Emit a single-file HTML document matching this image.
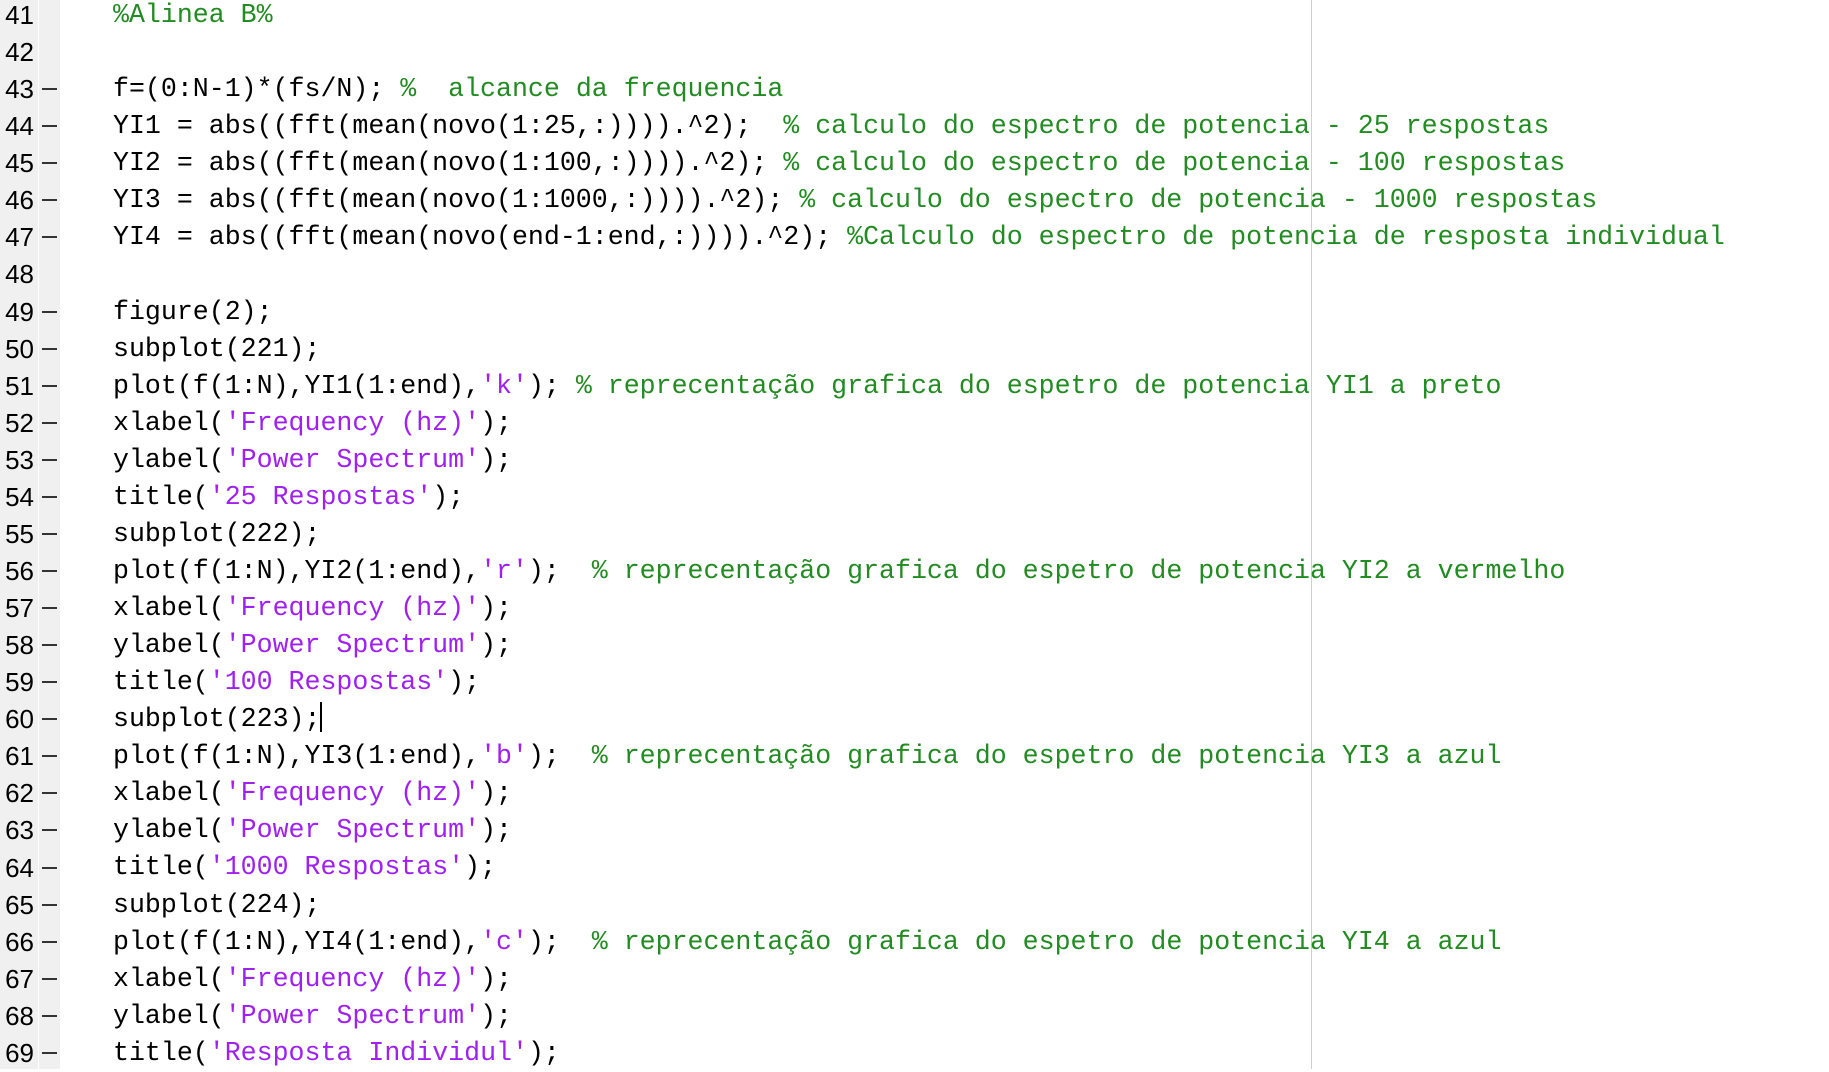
<!DOCTYPE html>
<html><head><meta charset="utf-8"><style>
html,body{margin:0;padding:0;width:1829px;height:1069px;overflow:hidden;background:#fff;}
#g1{position:absolute;left:0;top:0;width:38px;height:1069px;background:#f0f0f0;}
#g2{position:absolute;left:39px;top:0;width:21px;height:1069px;background:#f0f0f0;}
#vl{position:absolute;left:1311px;top:0;width:1px;height:1069px;background:#d0d0d0;}
.ln{position:absolute;left:0;width:34px;text-align:right;font-family:"Liberation Sans",sans-serif;font-size:26px;line-height:30px;color:#000;}
.d{position:absolute;left:42px;width:15px;height:2px;background:#333;}
pre{position:absolute;left:113px;top:-3px;margin:0;font-family:"Liberation Mono",monospace;font-size:26.6px;line-height:37.07px;color:#000;}
pre div{height:37.07px;white-space:pre;}
.c{color:#228B22}.s{color:#A020F0}
.cur{display:inline-block;width:2px;height:30px;background:#000;vertical-align:-6px;}
</style></head><body>
<div id="g1"></div><div id="g2"></div><div id="vl"></div>
<pre><div><span class="c">%Alinea B%</span></div><div> </div><div>f=(0:N-1)*(fs/N); <span class="c">%  alcance da frequencia</span></div><div>YI1 = abs((fft(mean(novo(1:25,:)))).^2);  <span class="c">% calculo do espectro de potencia - 25 respostas</span></div><div>YI2 = abs((fft(mean(novo(1:100,:)))).^2); <span class="c">% calculo do espectro de potencia - 100 respostas</span></div><div>YI3 = abs((fft(mean(novo(1:1000,:)))).^2); <span class="c">% calculo do espectro de potencia - 1000 respostas</span></div><div>YI4 = abs((fft(mean(novo(end-1:end,:)))).^2); <span class="c">%Calculo do espectro de potencia de resposta individual</span></div><div> </div><div>figure(2);</div><div>subplot(221);</div><div>plot(f(1:N),YI1(1:end),<span class="s">'k'</span>); <span class="c">% reprecentação grafica do espetro de potencia YI1 a preto</span></div><div>xlabel(<span class="s">'Frequency (hz)'</span>);</div><div>ylabel(<span class="s">'Power Spectrum'</span>);</div><div>title(<span class="s">'25 Respostas'</span>);</div><div>subplot(222);</div><div>plot(f(1:N),YI2(1:end),<span class="s">'r'</span>);  <span class="c">% reprecentação grafica do espetro de potencia YI2 a vermelho</span></div><div>xlabel(<span class="s">'Frequency (hz)'</span>);</div><div>ylabel(<span class="s">'Power Spectrum'</span>);</div><div>title(<span class="s">'100 Respostas'</span>);</div><div>subplot(223);<span class="cur"></span></div><div>plot(f(1:N),YI3(1:end),<span class="s">'b'</span>);  <span class="c">% reprecentação grafica do espetro de potencia YI3 a azul</span></div><div>xlabel(<span class="s">'Frequency (hz)'</span>);</div><div>ylabel(<span class="s">'Power Spectrum'</span>);</div><div>title(<span class="s">'1000 Respostas'</span>);</div><div>subplot(224);</div><div>plot(f(1:N),YI4(1:end),<span class="s">'c'</span>);  <span class="c">% reprecentação grafica do espetro de potencia YI4 a azul</span></div><div>xlabel(<span class="s">'Frequency (hz)'</span>);</div><div>ylabel(<span class="s">'Power Spectrum'</span>);</div><div>title(<span class="s">'Resposta Individul'</span>);</div></pre>
<div class="ln" style="top:0px">41</div>
<div class="ln" style="top:37px">42</div>
<div class="ln" style="top:74px">43</div><div class="d" style="top:88px"></div>
<div class="ln" style="top:111px">44</div><div class="d" style="top:125px"></div>
<div class="ln" style="top:148px">45</div><div class="d" style="top:162px"></div>
<div class="ln" style="top:185px">46</div><div class="d" style="top:199px"></div>
<div class="ln" style="top:222px">47</div><div class="d" style="top:236px"></div>
<div class="ln" style="top:259px">48</div>
<div class="ln" style="top:297px">49</div><div class="d" style="top:311px"></div>
<div class="ln" style="top:334px">50</div><div class="d" style="top:348px"></div>
<div class="ln" style="top:371px">51</div><div class="d" style="top:385px"></div>
<div class="ln" style="top:408px">52</div><div class="d" style="top:422px"></div>
<div class="ln" style="top:445px">53</div><div class="d" style="top:459px"></div>
<div class="ln" style="top:482px">54</div><div class="d" style="top:496px"></div>
<div class="ln" style="top:519px">55</div><div class="d" style="top:533px"></div>
<div class="ln" style="top:556px">56</div><div class="d" style="top:570px"></div>
<div class="ln" style="top:593px">57</div><div class="d" style="top:607px"></div>
<div class="ln" style="top:630px">58</div><div class="d" style="top:644px"></div>
<div class="ln" style="top:667px">59</div><div class="d" style="top:681px"></div>
<div class="ln" style="top:704px">60</div><div class="d" style="top:718px"></div>
<div class="ln" style="top:741px">61</div><div class="d" style="top:755px"></div>
<div class="ln" style="top:778px">62</div><div class="d" style="top:792px"></div>
<div class="ln" style="top:815px">63</div><div class="d" style="top:829px"></div>
<div class="ln" style="top:853px">64</div><div class="d" style="top:867px"></div>
<div class="ln" style="top:890px">65</div><div class="d" style="top:904px"></div>
<div class="ln" style="top:927px">66</div><div class="d" style="top:941px"></div>
<div class="ln" style="top:964px">67</div><div class="d" style="top:978px"></div>
<div class="ln" style="top:1001px">68</div><div class="d" style="top:1015px"></div>
<div class="ln" style="top:1038px">69</div><div class="d" style="top:1052px"></div>
</body></html>
